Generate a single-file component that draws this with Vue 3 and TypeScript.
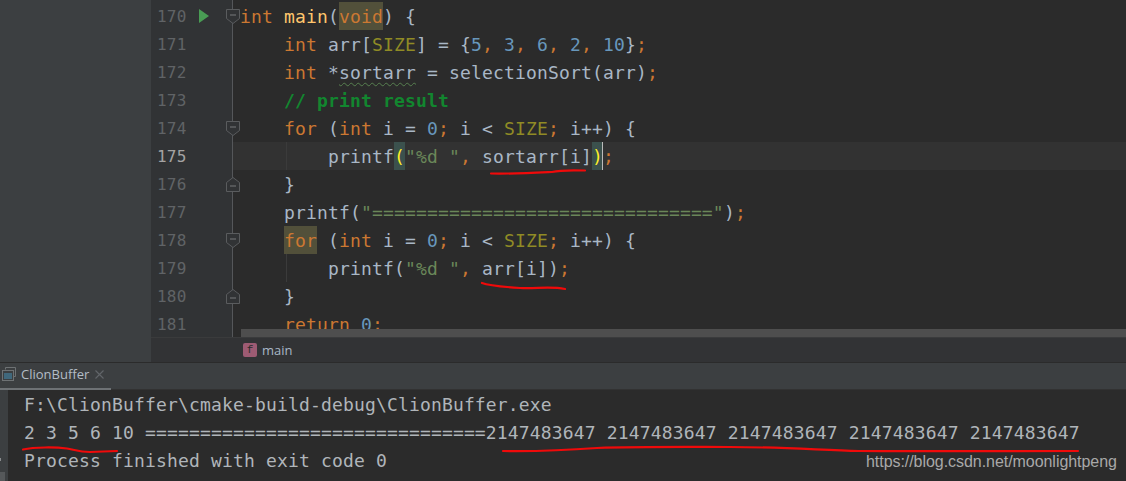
<script setup lang="ts">
type Seg = [string, string?];
interface Line {
  n: number;
  segs: Seg[];
  fold?: 'open' | 'close';
  run?: boolean;
  current?: boolean;
  guide?: boolean;
}

const IND = '    ';
const lines: Line[] = [
  { n: 170, run: true, fold: 'open', segs: [['int', 'kw'], [' '], ['main', 'fn'], ['('], ['void', 'kw hl'], [') {']] },
  { n: 171, segs: [[IND], ['int', 'kw'], [' arr['], ['SIZE', 'mac'], ['] = {'], ['5', 'num'], [',', 'kw'], [' '], ['3', 'num'], [',', 'kw'], [' '], ['6', 'num'], [',', 'kw'], [' '], ['2', 'num'], [',', 'kw'], [' '], ['10', 'num'], ['}'], [';', 'kw']] },
  { n: 172, segs: [[IND], ['int', 'kw'], [' *'], ['sortarr', 'typo'], [' = selectionSort(arr)'], [';', 'kw']] },
  { n: 173, segs: [[IND], ['// print result', 'cmt']] },
  { n: 174, fold: 'open', segs: [[IND], ['for', 'kw'], [' ('], ['int', 'kw'], [' i = '], ['0', 'num'], [';', 'kw'], [' i < '], ['SIZE', 'mac'], [';', 'kw'], [' i++) {']] },
  { n: 175, current: true, guide: true, segs: [[IND + IND], ['printf'], ['(', 'match'], ['"%d "', 'str'], [',', 'kw'], [' sortarr[i]'], [')', 'match caret'], [';', 'kw']] },
  { n: 176, fold: 'close', segs: [[IND + '}']] },
  { n: 177, segs: [[IND + 'printf('], ['"' + '='.repeat(31) + '"', 'str'], [')'], [';', 'kw']] },
  { n: 178, fold: 'open', segs: [[IND], ['for', 'kw hl'], [' ('], ['int', 'kw'], [' i = '], ['0', 'num'], [';', 'kw'], [' i < '], ['SIZE', 'mac'], [';', 'kw'], [' i++) {']] },
  { n: 179, guide: true, segs: [[IND + IND + 'printf('], ['"%d "', 'str'], [',', 'kw'], [' arr[i])'], [';', 'kw']] },
  { n: 180, fold: 'close', segs: [[IND + '}']] },
  { n: 181, segs: [[IND], ['return', 'kw'], [' '], ['0', 'num'], [';', 'kw']] },
];

const output: string[] = [
  'F:\\ClionBuffer\\cmake-build-debug\\ClionBuffer.exe',
  '2 3 5 6 10 ' + '='.repeat(31) + Array(5).fill('2147483647').join(' '),
  'Process finished with exit code 0',
];
</script>

<template>
  <div class="ide">
    <section class="top">
      <aside class="side"></aside>
      <div class="main">
        <div class="editor">
          <div class="gutter">
            <div v-for="l in lines" :key="l.n" class="gutter-row">
              <span class="num-cell" :class="{ now: l.current }">{{ l.n }}</span>
              <svg v-if="l.run" class="run" width="10" height="14" viewBox="0 0 10 14">
                <path d="M0 0 L10 7 L0 14 Z" fill="#499c54" />
              </svg>
              <svg v-if="l.fold === 'open'" class="fold" width="14" height="15" viewBox="0 0 14 15">
                <path d="M.5 .5 H13.5 V9.5 L7 14.5 L.5 9.5 Z" fill="#313335" stroke="#5a5c5e" />
                <path d="M4 6 H10" stroke="#787a7c" />
              </svg>
              <svg v-if="l.fold === 'close'" class="fold" width="14" height="15" viewBox="0 0 14 15">
                <path d="M.5 14.5 H13.5 V5.5 L7 .5 L.5 5.5 Z" fill="#313335" stroke="#5a5c5e" />
                <path d="M4 9 H10" stroke="#787a7c" />
              </svg>
            </div>
          </div>
          <div class="code">
            <div v-for="l in lines" :key="l.n" class="code-row" :class="{ current: l.current, guide: l.guide }">
              <span v-for="(s, i) in l.segs" :key="i" :class="s[1]">{{ s[0] }}</span>
            </div>
          </div>
          <div class="hscroll"></div>
        </div>
        <div class="crumbs">
          <span class="badge">f</span>
          <span class="crumb-text">main</span>
        </div>
      </div>
    </section>

    <header class="toolbar">
      <div class="tab">
        <svg class="tab-icon" width="14" height="14" viewBox="0 0 14 14">
          <path d="M3.5 2.5 V.5 H13.5 V9.5 H11.5" fill="none" stroke="#6e7274" />
          <rect x=".5" y="3.5" width="11" height="10" fill="#3c3f41" stroke="#6e7274" />
          <rect x="2" y="6" width="8" height="6" fill="#40687c" />
        </svg>
        <span class="tab-text">ClionBuffer</span>
        <svg class="tab-close" width="9" height="9" viewBox="0 0 9 9">
          <path d="M.5 .5 L8.5 8.5 M8.5 .5 L.5 8.5" stroke="#62666a" stroke-width="1.1" />
        </svg>
      </div>
    </header>

    <section class="console">
      <div class="strip"><i class="strip-dot"></i><i class="strip-thumb"></i></div>
      <div class="out">
        <div v-for="(t, i) in output" :key="i" class="out-row">{{ t }}</div>
      </div>
    </section>

    <svg class="ink" width="1126" height="481" viewBox="0 0 1126 481" fill="none">
      <path d="M491 173.500 C510 174 530 173 552 172 C560 170 570 170 585 170.500" />
      <path d="M482 283 C490 286 505 287 520 288 C535 289 550 286 565 289" />
      <path d="M23 449.500 C35 447 55 447 67 448.500 C75 450 80 452 90 452 L117 451" />
      <path d="M503 451 C540 451.500 570 450 597 448 C640 446.500 690 447 730 447 C780 447 820 450 859 451 C930 451.500 1000 451 1078 451" />
    </svg>
    <div class="mark">https://blog.csdn.net/moonlightpeng</div>
  </div>
</template>

<style scoped>
.ide {
  position: relative;
  width: 1126px;
  height: 481px;
  overflow: hidden;
  display: flex;
  flex-direction: column;
  background: #2b2b2b;
  font-family: "DejaVu Sans Mono", "Liberation Mono", monospace;
}
.top {
  display: flex;
  height: 363px;
  border-bottom: 1px solid #2b2b2b;
  box-sizing: border-box;
}
.side {
  width: 151px;
  flex: none;
  background: #3c3f41;
}
.main {
  flex: 1;
  display: flex;
  flex-direction: column;
  min-width: 0;
}
.editor {
  position: relative;
  height: 337px;
  flex: none;
  display: flex;
  overflow: hidden;
  border-bottom: 1px solid #3a3b3c;
  box-sizing: content-box;
}
.gutter {
  width: 81px;
  flex: none;
  padding-top: 2px;
  background: #313335;
  border-right: 1px solid #55575a;
}
.gutter-row {
  position: relative;
  height: 28px;
}
.num-cell {
  position: absolute;
  left: 6px;
  top: 0;
  line-height: 30px;
  font-size: 16px;
  letter-spacing: 0.2px;
  color: #606366;
}
.num-cell.now {
  color: #a4a3a3;
}
.run {
  position: absolute;
  left: 48px;
  top: 7px;
}
.fold {
  position: absolute;
  left: 75px;
  top: 7px;
  z-index: 2;
}
.code {
  flex: 1;
  min-width: 0;
  padding-top: 2px;
}
.code-row {
  position: relative;
  height: 28px;
  line-height: 30px;
  padding-left: 7px;
  font-size: 18px;
  letter-spacing: 0.16px;
  white-space: pre;
  color: #a9b7c6;
}
.code-row span {
  display: inline-block;
  height: 28px;
  vertical-align: top;
}
.code-row.current {
  background: #323232;
}
.code-row.guide::before {
  content: "";
  position: absolute;
  left: 53px;
  top: 0;
  bottom: 0;
  width: 1px;
  background: #3b3b3b;
}
.kw { color: #cc7832; }
.fn { color: #ffc66d; }
.num { color: #6897bb; }
.mac { color: #908b25; }
.str { color: #6a8759; }
.cmt { color: #12862f; font-weight: 700; }
.hl { background: #52503a; }
.code-row .typo {
  height: auto;
  text-decoration: underline wavy #56804f 1px;
  text-underline-offset: 3px;
}
.match {
  background: #3b514d;
  color: #ffef28;
}
.caret {
  box-shadow: inset -1px 0 0 #bbbbbb;
}
.hscroll {
  position: absolute;
  left: 90px;
  right: 0;
  top: 329px;
  height: 8px;
  background: #4e4e4e;
  z-index: 3;
}
.crumbs {
  flex: 1;
  display: flex;
  align-items: center;
  padding-left: 92px;
  gap: 5px;
  background: #323335;
}
.badge {
  width: 14px;
  height: 14px;
  border-radius: 2px;
  background: #9d5b73;
  color: #2b2b2b;
  font: 11px/14px "Liberation Mono", monospace;
  text-align: center;
}
.crumb-text {
  font: 13px "Open Sans", sans-serif;
  color: #a9b7c6;
}
.toolbar {
  height: 27px;
  flex: none;
  box-sizing: border-box;
  background: #3c3f41;
  border-bottom: 1px solid #323232;
  display: flex;
}
.tab {
  position: relative;
  width: 111px;
  box-sizing: border-box;
  display: flex;
  align-items: center;
  padding: 0 0 3px 2px;
  border-bottom: 2px solid #6e7275;
  margin-bottom: -1px;
}
.tab-icon {
  flex: none;
}
.tab-text {
  margin-left: 5px;
  font: 13px "Open Sans", sans-serif;
  color: #b4bdc6;
}
.tab-close {
  margin-left: 6px;
  flex: none;
}
.console {
  flex: 1;
  display: flex;
  min-height: 0;
}
.strip {
  position: relative;
  width: 8px;
  flex: none;
  background: #3c3f41;
}
.strip-dot {
  position: absolute;
  left: 0;
  top: 68px;
  width: 1px;
  height: 3px;
  background: #8a8c8e;
}
.strip-thumb {
  position: absolute;
  left: 0;
  bottom: 0;
  width: 5px;
  height: 9px;
  background: #55585a;
}
.out {
  padding: 1px 0 0 16px;
}
.out-row {
  height: 28px;
  line-height: 28px;
  font-size: 18px;
  letter-spacing: 0.16px;
  white-space: pre;
  color: #b0b5ba;
}
.ink {
  position: absolute;
  left: 0;
  top: 0;
  z-index: 5;
  pointer-events: none;
}
.ink path {
  stroke: #f00a0a;
  stroke-width: 2.2;
  stroke-linecap: round;
}
.mark {
  position: absolute;
  left: 866px;
  top: 452px;
  z-index: 6;
  font: 16px/20px "Liberation Sans", sans-serif;
  letter-spacing: -0.05px;
  color: #a8a8a8;
  white-space: nowrap;
}
</style>

<style>
html, body {
  margin: 0;
  background: #2b2b2b;
  overflow: hidden;
}
</style>
